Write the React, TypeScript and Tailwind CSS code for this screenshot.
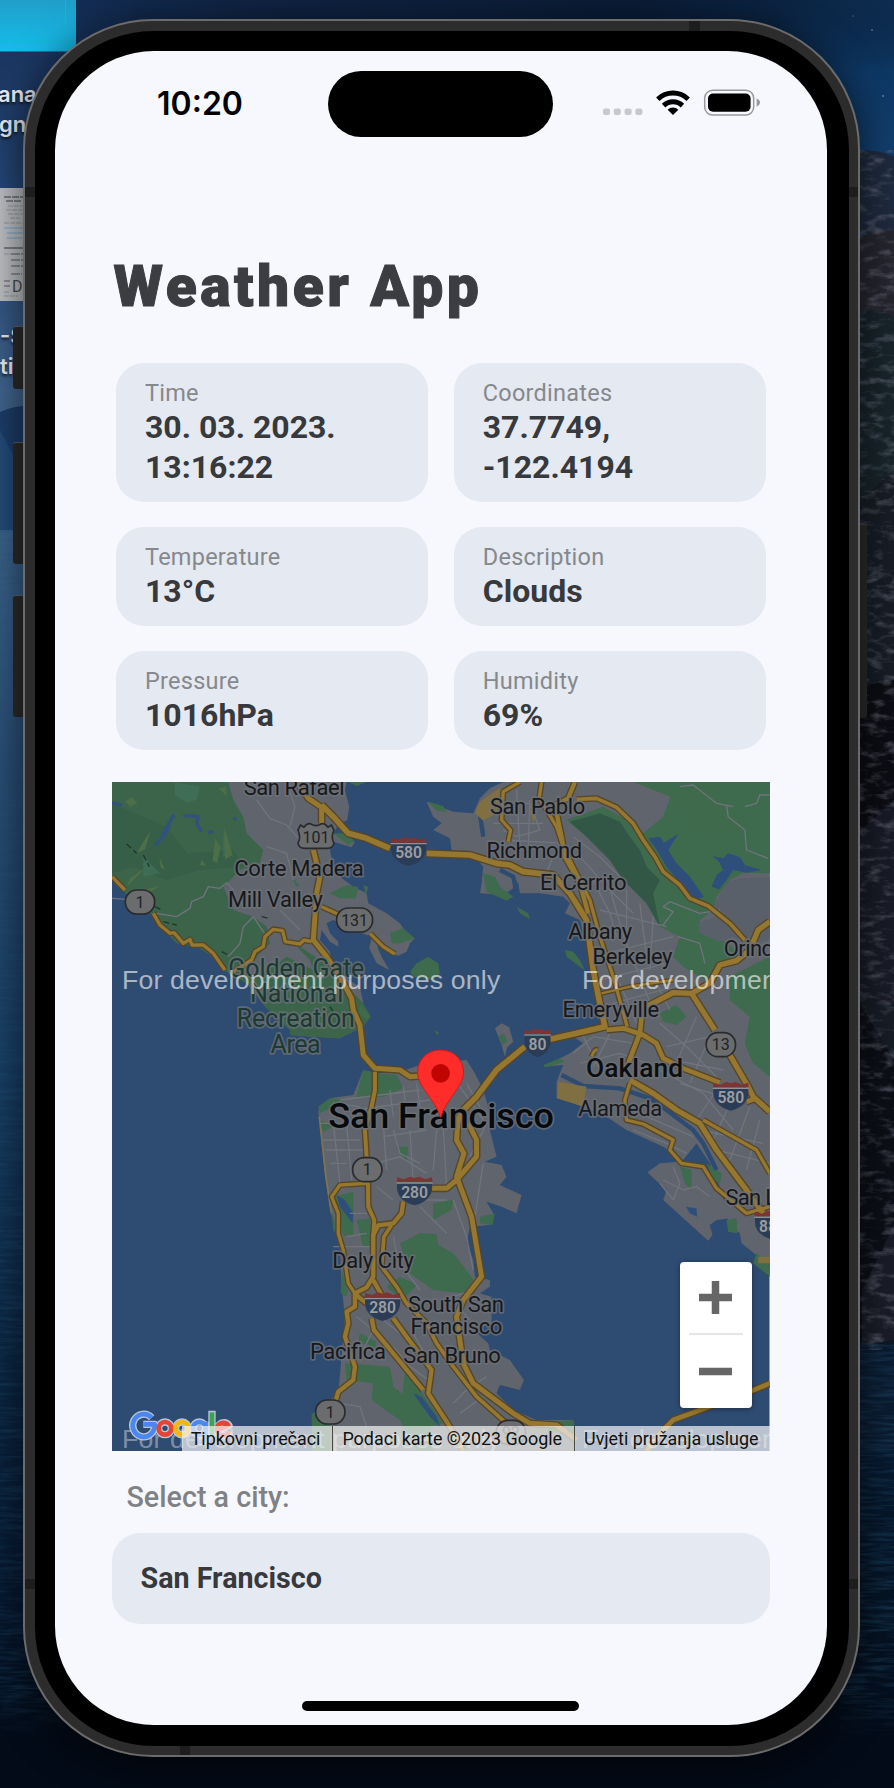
import React from "react";

type Road = { d: string; w?: number };

const roads: Road[] = [
  // Marin
  { d: "M590 36L625 85L665 112L665 160M640 240L660 320L650 370L640 510L680 560L720 620L755 685L760 720L780 765L790 855L825 895L900 900L930 920L1000 915", w: 18 },
  { d: "M665 105L700 140L745 190L800 205L870 235M980 250L1110 255L1190 280L1230 285L1270 305L1360 315L1410 370L1460 450L1480 600L1500 700L1515 770L1430 790L1350 808M1275 830L1190 900L1130 980L1090 1020L1070 1060", w: 20 },
  { d: "M36 320L75 360M160 430L180 465L210 490L222 488L250 520L270 508L276 525L310 525L340 550L375 600M400 605L455 570L465 545L490 530L495 500L520 478L548 482L556 515L600 522L612 510L635 515", w: 13 },
  { d: "M665 410L720 435M810 490L850 530L885 552", w: 13 },
  // Richmond to Oakland
  { d: "M1260 36L1210 65L1205 150L1232 180L1225 215", w: 13 },
  { d: "M1325 36L1318 85L1340 120L1370 170L1390 230L1425 300L1470 390L1500 500L1540 620L1582 770", w: 13 },
  { d: "M1425 36L1405 85L1365 105L1385 200L1395 260L1440 340L1465 430", w: 16 },
  { d: "M1430 88L1490 85L1550 112L1600 160L1630 210L1665 260L1690 305L1740 345L1770 385L1825 408L1890 460L1935 510", w: 14 },
  { d: "M2010 455L1975 480L1950 540L1910 572L1860 585L1830 640L1775 670L1720 668L1640 710M1775 670L1845 780M1890 855L1945 950L1960 980L2010 1025", w: 19 },
  { d: "M1520 780L1570 775L1630 795L1670 820L1690 865L1750 895L1860 938M1625 740L1620 790L1585 880M1940 995L1970 985", w: 17 },
  { d: "M1505 670L1590 650L1720 630", w: 10 },
  { d: "M1590 930L1660 970L1730 1020L1800 1060L1850 1140L1940 1260L1990 1330", w: 19 },
  { d: "M1590 940L1575 990L1580 1050L1630 1062L1720 1110L1710 1140L1745 1180L1810 1190L1850 1255L1940 1330L2010 1310M1810 1050L1890 1095L1970 1140L2010 1210", w: 13 },
  { d: "M1475 860Q1485 835 1492 840", w: 12 },
  // San Francisco and the peninsula
  { d: "M825 905L825 960L815 1010L795 1080L800 1160M804 1235L805 1310L823 1350L820 1400", w: 15 },
  { d: "M800 1240L720 1245L695 1280L715 1330L715 1390L730 1440L745 1540L765 1570", w: 13 },
  { d: "M910 1295L905 1330L880 1360L835 1366L820 1395L820 1520L800 1552L765 1570L765 1610L740 1625L745 1660L735 1700L765 1790L760 1830L715 1865L708 1890", w: 16 },
  { d: "M875 1365L852 1400L845 1490L890 1550L920 1600L980 1660L1010 1720L1060 1790L1130 1880L1220 1960", w: 14 },
  { d: "M820 1530L845 1575M765 1572L800 1600M880 1645L920 1700L995 1800L985 1870L1050 1970L1090 2043M815 1645L822 1680L880 1750L970 1860", w: 16 },
  { d: "M990 1255L1040 1255L1070 1230L1130 1160L1130 1110L1105 1060M1075 1040L1070 1110L1092 1150L1070 1220L1115 1340L1145 1520L1090 1590L1070 1640L1090 1780L1120 1840L1240 1930L1290 1960L1370 1965L1430 2010", w: 18 },
  { d: "M2010 1840L1950 1865L1720 1950L1690 1980L1640 2043", w: 17 },
];

const streets = [
  "M36 385L80 388M170 430L230 440L270 415L275 395L310 380L325 350L360 355L380 338L400 360",
  "M470 90L510 145L560 165L600 210M570 170L585 110L560 36M385 560L420 520L430 470L460 440L480 470L500 500M540 420L600 480M500 230L560 250L580 330",
  "M1740 50L1780 45L1850 100L1900 110M1880 105L1885 140L1935 180L1940 240L2005 265M1935 110L1970 100L1980 75L2010 75M1690 465L1720 425L1690 410L1710 395L1800 430L1860 420M1735 500L1800 520L1815 580",
  "M1200 100L1290 100L1320 180L1250 200L1210 180M1250 60L1260 230M1290 90L1285 240M1180 160L1330 160M1210 210L1400 220M1360 260L1330 330M1420 200L1500 260L1570 330M1440 260L1520 350L1600 430M1480 330L1530 430L1550 500M1520 320L1560 460L1590 560M1580 360L1580 520L1620 620M1620 400L1640 560M1660 440L1650 600M1500 420L1700 470M1480 560L1720 500M1500 630L1700 580M1540 700L1760 640M1560 640L1610 760M1620 620L1660 720M1660 620L1710 720",
  "M1420 850L1480 800L1600 820M1440 880L1560 850L1640 880M1450 800L1500 900M1530 790L1480 890M1680 760L1760 830L1850 920M1700 830L1830 800M1720 870L1870 900M1790 740L1720 900M1830 800L1770 940M1680 900L1810 970L1900 1080M1740 940L1900 990M1850 960L1790 1050M1900 980L1840 1110M1950 1010L1890 1170M1980 1050L1940 1200M1800 1080L1990 1120M1850 1140L2010 1180M1600 1080L1700 1120L1760 1150M1640 1040L1780 1100M1690 1230L1750 1260L1790 1250L1830 1280M1680 1240L1720 1290L1740 1240L1720 1190",
  "M660 1060H770M670 1110H780M675 1140H790M690 1180H740M700 1060L720 1240M740 1060L755 1230M850 1060L860 1200M850 1100L980 1080M880 1080L900 1150L960 1180M830 1180L900 1160L980 1210M930 1080L940 1240M1010 1080L1000 1200M1030 1070L1040 1250M830 1250L880 1290M930 1290L1040 1290M960 1310L1040 1390M1060 1290L1100 1400L1120 1500M1110 1160L1160 1060M1150 1180L1125 1340M880 1400L900 1500M900 1480L960 1560M700 1430L810 1430M750 1330H800M740 1400L800 1390",
  "M720 990L960 960M760 1020L990 990M870 960L880 1040M910 950L920 1030M950 940L960 1010M1080 950L1150 1050M1100 940L1140 1010M700 1000L780 1010M770 1640L820 1680L790 1740M940 1690L990 1780M1050 1580L1110 1650M1120 1560L1060 1580M720 1900L780 1910L800 1970M1060 1900L1100 1860L1160 1820M1080 1930L1150 1880M880 1730L930 1790L1000 1840M850 1650L900 1690",
];

type MapLabel = {
  text: string;
  x: number;
  y: number;
  w: number;
  size?: number;
  weight?: number;
  fill?: string;
};

const labels: MapLabel[] = [
  { text: "San Rafael", x: 431, y: 75, w: 303 },
  { text: "Corte Madera", x: 403, y: 317, w: 388 },
  { text: "Mill Valley", x: 384, y: 411, w: 285 },
  { text: "Golden Gate", x: 385, y: 620, w: 408, size: 75, fill: "#1c3a32" },
  { text: "National", x: 450, y: 697, w: 280, size: 75, fill: "#1c3a32" },
  { text: "Recreation", x: 410, y: 772, w: 355, size: 75, fill: "#1c3a32" },
  { text: "Area", x: 512, y: 848, w: 150, size: 75, fill: "#1c3a32" },
  { text: "San Pablo", x: 1170, y: 132, w: 286 },
  { text: "Richmond", x: 1160, y: 264, w: 287 },
  { text: "El Cerrito", x: 1320, y: 360, w: 260 },
  { text: "Albany", x: 1405, y: 507, w: 192 },
  { text: "Berkeley", x: 1478, y: 583, w: 240 },
  { text: "Orinda", x: 1872, y: 557, w: 184 },
  { text: "Emeryville", x: 1388, y: 741, w: 290 },
  { text: "Oakland", x: 1458, y: 920, w: 292, size: 79, weight: 500, fill: "#0d0e10" },
  { text: "Alameda", x: 1435, y: 1037, w: 252 },
  { text: "San Francisco", x: 685, y: 1075, w: 677, size: 108, weight: 500, fill: "#08090a" },
  { text: "Daly City", x: 697, y: 1493, w: 245 },
  { text: "South San", x: 924, y: 1627, w: 288 },
  { text: "Francisco", x: 932, y: 1692, w: 275 },
  { text: "Pacifica", x: 630, y: 1768, w: 228 },
  { text: "San Bruno", x: 910, y: 1778, w: 293 },
  { text: "San Leandro", x: 1877, y: 1305, w: 345 },
];

function Interstate({ x, y, n }: { x: number; y: number; n: string }) {
  const h = n.length > 2 ? 54 : 40;
  return (
    <g transform={`translate(${x} ${y})`}>
      <path
        d={`M${-h + 2} -26H${h - 2}Q${h + 6} 26 0 42Q${-h - 6} 26 ${-h + 2} -26Z`}
        fill="#2b3d56"
      />
      <path
        d={`M${-h + 2} -42L${-h * 0.6} -36L${-h * 0.25} -44L0 -40L${h * 0.25} -44L${h * 0.6} -36L${h - 2} -42L${h} -28H${-h}Z`}
        fill="#7d3433"
      />
      <path d={`M${-h} -25H${h}`} stroke="#8f9196" strokeWidth="4" />
      <text y="19" textAnchor="middle" fontSize="47" fontWeight="600" fill="#9b9da1">
        {n}
      </text>
    </g>
  );
}

function StateRoute({ x, y, n }: { x: number; y: number; n: string }) {
  const w = n.length === 3 ? 54 : 44;
  return (
    <g transform={`translate(${x} ${y})`}>
      <rect x={-w} y="-36" width={w * 2} height="72" rx="35" fill="#6b6c6e" stroke="#292a2c" strokeWidth="5" />
      <text y="17" textAnchor="middle" fontSize="48" fontWeight="400" fill="#222325">
        {n}
      </text>
    </g>
  );
}

function BayMap() {
  return (
    <svg
      viewBox="36 36 1973 2007"
      preserveAspectRatio="none"
      className="block h-full w-full"
      fontFamily="Roboto, sans-serif"
      strokeLinejoin="round"
    >
      <rect x="36" y="36" width="1973" height="2007" fill="#2e4b72" />

      <g fill="#5f646d">
        <path d="M36 36H740L735 60L748 110L742 150L715 165L700 190L740 200L765 215L755 232L700 215L690 240L700 290L720 320L760 350L800 370L805 400L860 430L900 460L920 490L945 505L930 520L920 545L895 557L860 545L830 525L845 560L868 600L830 580L808 535L815 500L760 480L700 450L680 460L690 490L715 515L715 530L690 515L665 480L660 510L690 545L700 600L730 620L780 650L790 700L812 740L790 770L720 805L640 800L570 795L570 780L500 715L440 640L380 605L340 560L290 530L230 520L190 480L150 430L110 400L36 330Z" />
        <path d="M2010 36H1210L1170 55L1140 85L1120 130L1060 125L1020 110L980 95L1000 140L1025 160L1000 180L1050 205L1055 240L1120 255L1150 290L1145 340L1140 370L1210 375L1240 355L1235 320L1255 340L1260 370L1320 370L1390 380L1410 400L1395 430L1440 450L1460 520L1480 600L1490 660L1495 730L1512 770L1420 800L1450 820L1410 850L1330 890L1390 885L1370 935L1370 985L1455 1010L1520 1040L1580 1080L1690 1130L1750 1170L1790 1120L1830 1180L1860 1250L1890 1330L1880 1360L1920 1390L1925 1420L2000 1480L2010 1500Z" />
        <path d="M1645 1205L1680 1180L1760 1173L1810 1190L1850 1250L1890 1320L1895 1345L1850 1350L1830 1365L1838 1395L1825 1412L1690 1290L1700 1260L1645 1210Z" />
        <path d="M655 1020L690 985L760 975L790 900L830 910L900 905L960 885L1100 870L1125 910L1150 960L1165 1010L1170 1080L1190 1160L1155 1175L1205 1185L1220 1220L1200 1245L1265 1275L1250 1330L1205 1310L1160 1295L1180 1330L1170 1365L1110 1370L1100 1420L1120 1470L1125 1520L1170 1530L1170 1550L1140 1570L1175 1580L1175 1660L1120 1680L1165 1720L1170 1740L1230 1770L1272 1830L1260 1860L1200 1845L1190 1870L1240 1920L1310 1950L1420 1950L1430 2043H640V1930L715 1870L725 1760L735 1640L725 1550L720 1440L690 1320L675 1220Z" />
        <path d="M1185 775L1205 760L1228 772L1240 815L1222 832L1215 860L1205 825Z" />
      </g>

      <path d="M36 36H385L400 90L430 140L440 190L490 240L480 280L420 300L370 350L400 420L460 440L500 470L510 520L560 550L600 530L690 590L730 640L790 700L812 740L790 770L720 805L640 800L570 795L570 780L500 715L440 640L380 605L340 560L290 530L230 520L190 480L150 430L110 400L36 330Z" fill="#3b644a" />
      <path d="M36 100L200 170L260 250L400 240L430 290L300 300L200 330L100 290L36 310Z" fill="#365c46" opacity="0.7" />
      <path d="M225 36L300 50L290 90L260 98L225 75ZM130 260L180 310L130 320ZM370 190L395 245L370 260Z" fill="#41705a" opacity="0.7" />
      <path d="M510 520L560 500L630 570L640 600L560 560L520 590L470 620L440 600L480 550Z" fill="#5f646d" />
      <g fill="#4c6e49">
        <path d="M75 95L95 82L112 98L92 110ZM355 55L378 50L380 78ZM345 205L362 230L352 280L338 272ZM372 170L398 255L375 268ZM130 215L152 182L135 238L110 250ZM90 325L140 290L80 350ZM110 365L180 348L130 378ZM178 260L195 300L182 290ZM305 270L320 288L300 285Z" />
      </g>
      <path d="M165 225L185 205L195 180L212 150L222 135M210 165L190 200M250 137L295 140L290 160L305 185M325 188L340 184M400 145L410 148M36 98L65 106" stroke="#30527c" strokeWidth="10" fill="none" />
      <path d="M80 222L110 250M130 255L148 290M165 410L185 420M190 455L230 465M365 545L390 558M485 440L505 445M690 710L700 725" stroke="#1d382b" strokeWidth="4" fill="none" strokeDasharray="18 9" />
      <g fill="#3e6a4e">
        <path d="M690 370L740 345L775 350L768 385L720 385ZM790 345L805 350L798 375ZM870 490L910 475L945 505L900 520L875 520ZM930 605L950 580L985 560L1015 580L1020 610L1000 630L940 620ZM780 700L812 740L800 750L775 730ZM1003 780L1018 788L1012 795ZM700 190L740 190L765 215L745 225ZM745 36L800 36L770 48ZM985 95L1030 108L1040 125L1010 122ZM575 320L598 345L590 350Z" />
        <path d="M1400 150L1510 110L1590 155L1630 190L1690 140L1712 80L1600 36H2010V310L1930 308L1890 330L1850 380L1840 420L1800 450L1800 490L1870 510L1930 560L1850 600L1830 640L1750 590L1720 560L1740 500L1680 470L1640 400L1570 330L1530 270L1460 200Z" />
        <path d="M1890 620L2010 560V920L1960 880L1935 820L1950 740L1890 690ZM1680 730L1730 705L1760 740L1730 765L1690 755ZM1150 310L1185 320L1200 350L1240 380L1220 392L1160 365ZM1250 410L1285 430L1290 448L1260 430ZM1395 540L1420 545L1440 570L1455 600L1440 590L1400 560ZM1330 885L1380 865L1395 875L1340 892ZM1740 1190L1775 1200L1775 1260L1755 1240ZM1880 1350L1910 1345L1912 1390L1885 1385ZM1820 1180L1865 1210L1860 1240L1840 1230ZM1970 1450L2010 1480V1520L1960 1480Z" />
        <path d="M790 900L830 910L890 915L910 955L850 980L768 985ZM655 1010L690 985L735 990L700 1010L660 1030ZM660 1050L700 1070L670 1085ZM890 1130L925 1130L920 1175L900 1150ZM700 1280L760 1265L760 1395L730 1398L715 1330ZM770 1350L810 1345L815 1430L790 1430ZM900 1420L960 1390L1010 1392L1015 1425L1060 1450L1122 1530L1090 1570L1000 1560L930 1510ZM860 1550L900 1520L952 1545L905 1590ZM1000 1300L1060 1290L1055 1320L1000 1350ZM780 1690L830 1715L825 1735L775 1715ZM735 1780L870 1790L880 1850L930 1890L990 1960L1000 2043H950L900 1950L815 1890L820 1840L740 1830ZM915 1810L960 1860L1030 1960L990 1970L905 1890ZM635 1930L690 1950V2043H635ZM1140 1340L1185 1330L1178 1365L1140 1360ZM690 1280L700 1340L715 1400L700 1380ZM725 1500L745 1560L740 1580L722 1570ZM1320 1960L1420 1950L1428 1990L1350 1985Z" />
        <path d="M1196 800L1212 790L1222 815L1208 825Z" />
      </g>
      <path d="M1410 155L1500 130L1560 155L1590 200L1620 240L1640 290L1680 330L1660 370L1680 470L1640 400L1570 330L1530 270L1460 200Z" fill="#335746" />
      <path d="M1690 60L1850 50L1880 110L1930 170L1840 200L1760 160L1740 110Z" fill="#406a4c" opacity="0.8" />
      <g fill="#2e4f7c">
        <path d="M1645 205L1680 200L1692 218L1735 192L1705 240L1730 280L1770 320L1812 380L1790 390L1750 350L1700 290L1665 230Z" />
        <path d="M1838 258L1870 265L1885 250L1920 262L1935 285L1985 300L1940 308L1900 300L1880 330L1858 358L1835 350L1850 315L1870 300L1858 275Z" />
        <path d="M710 1275L735 1290L760 1330L758 1360L720 1310ZM940 1870L965 1880L1010 1940L1020 1970L990 1940Z" />
        <path d="M1758 1310L1790 1315L1792 1340L1770 1330Z" />
      </g>
      {/* Orinda valley */}
      <path d="M1885 335L1930 325L2010 322V510L1960 520L1900 500L1860 515L1800 490L1795 460L1850 440L1845 400Z" fill="#5a606a" />
      <path d="M1385 915L1450 948L1560 955L1650 985L1700 1020L1780 1080L1810 1120L1850 1200M1140 130L1150 200M1200 300L1240 320L1250 360" fill="none" stroke="#2e4b72" strokeWidth="13" />
      <path d="M1140 95L1190 60L1240 48L1200 85L1190 130L1150 152L1125 130ZM1375 935L1460 950L1450 1010L1372 985ZM1975 1460H2010V1480H1975ZM1290 120L1310 130L1300 160Z" fill="#806f41" />
      <path d="M658 1040L678 1220L695 1330" stroke="#80744f" strokeWidth="5" fill="none" />

      <g fill="none" stroke="#70747c" strokeWidth="4">
        {streets.map((d) => (
          <path key={d} d={d} />
        ))}
      </g>

      <g fill="none" stroke="#564628">
        {roads.map((r) => (
          <path key={r.d} d={r.d} strokeWidth={(r.w ?? 14) + 5} />
        ))}
      </g>
      <g fill="none" stroke="#96772f">
        {roads.map((r) => (
          <path key={r.d} d={r.d} strokeWidth={(r.w ?? 14) - 3} />
        ))}
      </g>

      <path
        d="M602 165L612 172Q622 158 633 162Q648 172 663 162Q674 158 684 172L694 165L702 180Q692 200 702 220Q698 236 680 235H616Q598 236 594 220Q604 200 594 180Z"
        fill="#6b6c6e"
        stroke="#292a2c"
        strokeWidth="5"
      />
      <text x="648" y="218" textAnchor="middle" fontSize="48" fontWeight="400" fill="#222325">101</text>
      <Interstate x={926} y={246} n="580" />
      <Interstate x={1313} y={820} n="80" />
      <Interstate x={1893} y={980} n="580" />
      <Interstate x={944} y={1264} n="280" />
      <Interstate x={848} y={1611} n="280" />
      <Interstate x={2018} y={1367} n="880" />
      <StateRoute x={120} y={396} n="1" />
      <StateRoute x={764} y={450} n="131" />
      <StateRoute x={1863} y={824} n="13" />
      <StateRoute x={802} y={1199} n="1" />
      <StateRoute x={691} y={1926} n="1" />
      <StateRoute x={1233} y={1987} n="92" />

      <g stroke="#6c7077" strokeOpacity="0.8" strokeWidth="10" paintOrder="stroke">
        {labels.map((l) => (
          <text
            key={l.text + l.y}
            x={l.x}
            y={l.y}
            textLength={l.w}
            fontSize={l.size ?? 66}
            fontWeight={l.weight ?? 400}
            fill={l.fill ?? "#17181b"}
          >
            {l.text}
          </text>
        ))}
      </g>

      <path
        d="M1022 840C981 840 953 870 953 908C953 950 1004 985 1022 1042C1040 985 1091 950 1091 908C1091 870 1063 840 1022 840Z"
        fill="#ff2d2a"
        stroke="#d21a1a"
        strokeWidth="3"
      />
      <circle cx="1022" cy="910" r="28" fill="#c00500" />

      <g fontFamily="'Liberation Sans', Arial, sans-serif" fontSize="80" fill="#ffffff" fillOpacity="0.6">
        <text x="66" y="657" textLength="1135">For development purposes only</text>
        <text x="1446" y="657" textLength="1135">For development purposes only</text>
        <text x="66" y="2035" textLength="1135" fillOpacity="0.4">For development purposes only</text>
        <text x="1446" y="2035" textLength="1135" fillOpacity="0.4">For development purposes only</text>
      </g>

      <g fill="none" strokeLinecap="butt">
        <g stroke="#b9c6d8" strokeWidth="22">
          <path d="M155 1943A33 34 0 1 0 164 1963H130" />
          <circle cx="195" cy="1975" r="19" />
          <circle cx="246" cy="1975" r="19" />
          <circle cx="298" cy="1975" r="19" />
          <path d="M317 1955V1998Q315 2018 296 2016M336 1922V2001M389 1985A19 19 0 1 1 387 1966L357 1979" />
        </g>
        <g strokeWidth="14">
          <path d="M155 1943A33 34 0 1 0 164 1963H130" stroke="#4a87ee" />
          <circle cx="195" cy="1975" r="19" stroke="#e54436" />
          <circle cx="246" cy="1975" r="19" stroke="#f5b70c" />
          <circle cx="298" cy="1975" r="19" stroke="#4a87ee" />
          <path d="M317 1955V1998Q315 2018 296 2016" stroke="#4a87ee" />
          <path d="M336 1927V1997" stroke="#38a552" />
          <path d="M387 1985A19 19 0 1 1 385 1966L357 1979" stroke="#e54436" />
        </g>
      </g>
    </svg>
  );
}

function Backdrop() {
  return (
    <svg viewBox="0 0 894 1788" className="absolute inset-0 h-full w-full" preserveAspectRatio="none">
      <defs>
        <linearGradient id="top" x1="0" y1="0" x2="1" y2="0">
          <stop offset="0" stopColor="#14305a" />
          <stop offset="0.3" stopColor="#0f2342" />
          <stop offset="0.7" stopColor="#0a1c36" />
          <stop offset="0.88" stopColor="#0b2443" />
          <stop offset="1" stopColor="#0c2d50" />
        </linearGradient>
        <linearGradient id="left" x1="0" y1="0" x2="0" y2="1">
          <stop offset="0" stopColor="#142d54" stopOpacity="0" />
          <stop offset="0.03" stopColor="#1b3660" />
          <stop offset="0.11" stopColor="#26497b" />
          <stop offset="0.22" stopColor="#41658f" />
          <stop offset="0.3" stopColor="#3c648c" />
          <stop offset="0.42" stopColor="#2b5078" />
          <stop offset="0.6" stopColor="#173e64" />
          <stop offset="0.75" stopColor="#0b2744" />
          <stop offset="0.9" stopColor="#06182f" />
          <stop offset="1" stopColor="#030b18" />
        </linearGradient>
        <linearGradient id="right" x1="0" y1="0" x2="0" y2="1">
          <stop offset="0" stopColor="#0b2444" stopOpacity="0" />
          <stop offset="0.04" stopColor="#0d3763" />
          <stop offset="0.09" stopColor="#133f6e" />
          <stop offset="0.7" stopColor="#0a1b2d" />
          <stop offset="0.8" stopColor="#071b31" />
          <stop offset="1" stopColor="#040c18" />
        </linearGradient>
        <linearGradient id="bottom" x1="0" y1="0" x2="0" y2="1">
          <stop offset="0" stopColor="#030b18" stopOpacity="0" />
          <stop offset="0.5" stopColor="#030b18" />
        </linearGradient>
        <filter id="rock" x="0" y="0" width="100%" height="100%">
          <feTurbulence type="fractalNoise" baseFrequency="0.06 0.14" numOctaves="5" seed="8" />
          <feColorMatrix values="0 0 0 0 0.24  0 0 0 0 0.25  0 0 0 0 0.32  2.6 0 0 0 -1.25" />
        </filter>
        <filter id="sea" x="0" y="0" width="100%" height="100%">
          <feTurbulence type="fractalNoise" baseFrequency="0.03 0.3" numOctaves="3" seed="3" />
          <feColorMatrix values="0 0 0 0 0.02  0 0 0 0 0.1  0 0 0 0 0.2  1.5 0 0 0 -0.6" />
        </filter>
      </defs>
      <rect width="894" height="1788" fill="url(#top)" />
      <rect width="130" height="1788" fill="url(#left)" />
      <rect x="780" width="114" height="1788" fill="url(#right)" />
      <path d="M0 412Q18 404 40 406V530H0Z" fill="#1c3d69" />
      <path d="M0 430Q20 470 40 500V530H0Z" fill="#234b78" />
      <rect y="530" width="110" height="1258" filter="url(#sea)" opacity="0.5" />

      <path d="M840 154Q870 146 894 156V1370H840Z" fill="#1e2a3e" />
      <path d="M840 250Q868 228 894 230V1370H840Z" fill="#25252f" />
      <path d="M840 325Q866 300 894 318V1370H840Z" fill="#18242b" />
      <path d="M840 520Q870 492 894 470V1370H840Z" fill="#171d26" />
      <path d="M840 690L894 680V800L840 850Z" fill="#0c0d13" />
      <path d="M840 850L894 800V1010L840 980Z" fill="#191b27" />
      <path d="M840 970L894 1060V1370H840Z" fill="#0c0f17" />
      <path d="M862 1290L894 1225V1340L862 1345Z" fill="#1a1d28" />
      <path d="M840 1345H894V1450H840Z" fill="#0b1c31" />
      <rect x="840" y="150" width="54" height="1200" filter="url(#rock)" opacity="0.45" />
      <rect x="840" y="1340" width="54" height="448" filter="url(#sea)" opacity="0.6" />
      <g fill="#8faacb">
        <circle cx="853" cy="16" r="0.5" />
        <circle cx="872" cy="30" r="0.7" />
        <circle cx="883" cy="96" r="0.8" />
      </g>
      <rect y="1690" width="894" height="98" fill="url(#bottom)" />
    </svg>
  );
}

function DesktopItems() {
  return (
    <div className="absolute left-0 top-0 h-[420px] w-[80px] overflow-hidden font-['Inter',sans-serif] text-[22px] font-semibold leading-9 text-[#e9edf3] [text-shadow:0_2px_3px_rgba(0,0,0,0.7)]">
      <div className="h-[52px] w-[76px] border-b border-[#1b6fa0] bg-linear-to-b from-[#1f9fc8] to-[#12bdec]">
        <div className="h-[42px] w-[66px] rounded-br-sm border-b border-r border-[#33a9cf]" />
      </div>
      <div className="mt-6 -ml-0.5">ana</div>
      <div className="-mt-1.5 -ml-px">gn</div>
      <div className="mt-[46px] flex h-[113px] w-[30px] flex-col justify-end bg-[#bfc1c5]">
        <svg viewBox="0 0 30 113" className="h-full w-full">
          <path d="M4 9H24M6 13H22" stroke="#6a6c72" strokeWidth="1.6" strokeDasharray="7 1" />
          <path d="M8 18H24M6 22H24M8 26H24M10 30H20M4 35H24M4 66H20M4 104H10M4 108H18" stroke="#94979d" strokeWidth="1.2" strokeDasharray="5 1" />
          <path d="M4 40H24M7 45H24M7 50H22" stroke="#8fb0cc" strokeWidth="1.4" />
          <path d="M4 60H24" stroke="#6a6c72" strokeWidth="1.6" />
          <path d="M11 66H24M11 72H24M11 78H24M11 86H22M4 93H10M4 98H10" stroke="#8b8e94" strokeWidth="2" strokeDasharray="9 1" />
          <text x="12" y="104" fontSize="16" fill="#4a4c50" className="font-['Roboto',sans-serif] font-normal [text-shadow:none]">D</text>
        </svg>
      </div>
      <div className="mt-[17px]">-S</div>
      <div className="-mt-1.5">ti</div>
    </div>
  );
}

function StatusBar() {
  return (
    <div className="flex h-[66px] items-center">
      <div className="ml-[57.5px] w-[176px] text-center font-['Inter',sans-serif] text-[32px] font-semibold leading-none text-black">
        10:20
      </div>
      <div className="ml-[40px] h-[66px] w-[225px] shrink-0 rounded-full bg-black" />
      <svg viewBox="600 85 162 36" className="ml-[46.5px] mt-[-1px] h-9 w-[162px] shrink-0">
        <g fill="#c7c7cd">
          <rect x="603" y="108.5" width="7" height="6.5" rx="2" />
          <rect x="613.8" y="108.5" width="7" height="6.5" rx="2" />
          <rect x="624.6" y="108.5" width="7" height="6.5" rx="2" />
          <rect x="635.4" y="108.5" width="7" height="6.5" rx="2" />
        </g>
        <g fill="none" stroke="#000" strokeWidth="5">
          <path d="M657.8 99.2A22 22 0 0 1 688.2 99.2" />
          <path d="M663.6 105.6A13.4 13.4 0 0 1 682.4 105.6" />
        </g>
        <path d="M673 115L667.6 109.7A7.6 7.6 0 0 1 678.4 109.7Z" fill="#000" />
        <rect x="704.7" y="90.2" width="49" height="24.8" rx="8" fill="none" stroke="#98989d" strokeWidth="1.5" />
        <rect x="708" y="93.5" width="42.6" height="18.2" rx="5" fill="#000" />
        <path d="M756.6 98.5Q760 100 760 102.6Q760 105.2 756.6 106.7Z" fill="#98989d" />
      </svg>
    </div>
  );
}

const readings = [
  { label: "Time", value: ["30. 03. 2023.", "13:16:22"] },
  { label: "Coordinates", value: ["37.7749,", "-122.4194"] },
  { label: "Temperature", value: ["13°C"] },
  { label: "Description", value: ["Clouds"] },
  { label: "Pressure", value: ["1016hPa"] },
  { label: "Humidity", value: ["69%"] },
];

function ReadingCard({ label, value }: { label: string; value: string[] }) {
  return (
    <div className="rounded-[28px] bg-[#e4e9f2] px-[29px] pb-[15px] pt-[17px]">
      <div className="text-[23.5px] leading-[27px] tracking-[0.25px] text-[#86888c]">{label}</div>
      {value.map((line) => (
        <div key={line} className="text-[32px] font-bold leading-10 text-[#37393c]">
          {line}
        </div>
      ))}
    </div>
  );
}

export default function App() {
  return (
    <div className="relative h-[1788px] w-[894px] overflow-hidden font-['Roboto',sans-serif]">
      <Backdrop />
      <DesktopItems />

      <div className="relative ml-[23px] w-[837px] pt-[19px]">
        <div className="absolute left-[-10px] top-[326px] h-[63px] w-3 rounded-l-[3px] border-t border-[#666] bg-[#2b2b2b]" />
        <div className="absolute left-[-10px] top-[442px] h-[122px] w-3 rounded-l-[3px] border-t border-[#666] bg-[#2b2b2b]" />
        <div className="absolute left-[-10px] top-[595px] h-[122px] w-3 rounded-l-[3px] border-t border-[#666] bg-[#2b2b2b]" />
        <div className="absolute right-[-7px] top-[524px] h-[194px] w-3 rounded-r-[3px] border-t border-[#444] bg-[#2b2b2b]" />

        <div className="relative h-[1738px] rounded-[130px] border-2 border-[#6b6b6b] bg-[#2c2c2c] p-[9.5px] shadow-[0_8px_34px_6px_rgba(0,0,0,0.5)]">
          <div className="absolute left-0 top-[166px] h-[10px] w-[10px] bg-[#1d1d1d]" />
          <div className="absolute right-0 top-[166px] h-[10px] w-[10px] bg-[#1d1d1d]" />
          <div className="absolute left-0 top-[1558px] h-[10px] w-[10px] bg-[#1d1d1d]" />
          <div className="absolute right-0 top-[1558px] h-[10px] w-[10px] bg-[#1d1d1d]" />
          <div className="absolute left-[664px] top-0 h-[10px] w-[11px] bg-[#1d1d1d]" />
          <div className="absolute bottom-0 left-[155px] h-[10px] w-[10px] bg-[#1d1d1d]" />

          <div className="relative h-full rounded-[119px] bg-black pb-[21px] pl-[20px] pr-[22px] pt-[20px]">
            <div className="flex h-full flex-col overflow-hidden rounded-[99px] bg-[#f7f8fd] pt-[20px]">
              <StatusBar />

              <main className="flex flex-col pl-[57.5px] pr-[57px]">
                <h1 className="ml-[1.5px] mt-[116px] whitespace-nowrap text-[57px] font-black leading-[68px] tracking-[3.5px] text-[#3b3d40] [-webkit-text-stroke:1px_#3b3d40]">
                  Weather App
                </h1>

                <section className="mx-[4px] mt-[42.5px] grid grid-cols-2 gap-x-[26px] gap-y-[25px]">
                  {readings.map((r) => (
                    <ReadingCard key={r.label} label={r.label} value={r.value} />
                  ))}
                </section>

                <section className="relative mt-[32px] h-[669px]">
                  <BayMap />
                  <div className="absolute bottom-[43px] right-[18px] flex h-[146px] w-[72px] flex-col items-center rounded-[4px] bg-white shadow-[0_1px_5px_rgba(0,0,0,0.4)]">
                    <button className="flex h-[73px] w-[54px] items-center justify-center border-b-2 border-[#e6e6e6]">
                      <svg viewBox="0 0 33 33" className="h-[33px] w-[33px]">
                        <path d="M0 16.5H33M16.5 0V33" stroke="#666666" strokeWidth="7.5" />
                      </svg>
                    </button>
                    <button className="flex h-[73px] w-[54px] items-center justify-center">
                      <svg viewBox="0 0 33 33" className="h-[33px] w-[33px]">
                        <path d="M0 16.5H33" stroke="#666666" strokeWidth="7.5" />
                      </svg>
                    </button>
                  </div>
                  <div className="absolute bottom-0 right-0 flex h-[25px] items-center bg-[#f5f5f5]/70 text-[17.9px] leading-[25px] text-[#111111]">
                    <span className="whitespace-nowrap pl-[9px] pr-[12px]">Tipkovni prečaci</span>
                    <span className="h-full w-px bg-[#4a4a3c]" />
                    <span className="whitespace-nowrap pl-[9px] pr-[12px]">Podaci karte ©2023 Google</span>
                    <span className="h-full w-px bg-[#4a4a3c]" />
                    <span className="whitespace-nowrap pl-[9px] pr-[11px]">Uvjeti pružanja usluge</span>
                  </div>
                </section>

                <label className="ml-[14.5px] mt-[29px] text-[28.7px] font-medium leading-[34px] text-[#808185]">
                  Select a city:
                </label>
                <div className="mt-[18.5px] flex h-[91px] items-center rounded-[28px] bg-[#e4e9f2] px-[28.5px] pt-px text-[28.7px] font-bold text-[#37393c]">
                  San Francisco
                </div>
              </main>

              <div className="mx-auto mt-[77.5px] h-[9.5px] w-[277px] rounded-full bg-black" />
            </div>
          </div>
        </div>
      </div>
    </div>
  );
}
